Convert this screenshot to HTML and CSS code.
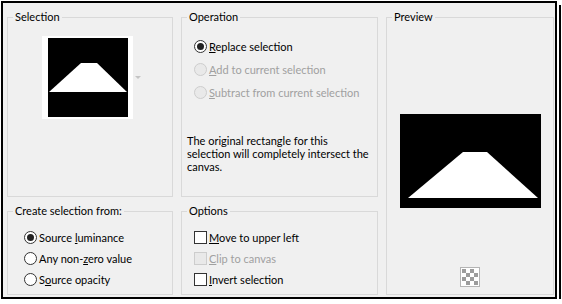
FILE: index.html
```html
<!DOCTYPE html>
<html lang="en">
<head>
    <meta charset="UTF-8">
    <meta name="viewport" content="width=device-width, initial-scale=1.0">
    <title>Selection from mask</title>
    <link rel="stylesheet" href="styles.css">
</head>
<body>

    <div class="frame">
        <div class="dialog">

            <fieldset class="group sel">
                <legend>Selection</legend>
                <div class="thumb-row">
                    <div class="thumb">
                        <svg width="80" height="79" viewBox="0 0 80 79">
                            <rect width="80" height="79" fill="#000"/>
                            <polygon points="33,25 49,25 79,54 1,54" fill="#fff"/>
                        </svg>
                    </div>
                    <span class="drop-arrow"></span>
                </div>
            </fieldset>

            <fieldset class="group op">
                <legend>Operation</legend>
                <div class="op-list">
                    <div class="opt"><span class="radio on"></span><span><u>R</u>eplace selection</span></div>
                    <div class="opt off"><span class="radio"></span><span><u>A</u>dd to current selection</span></div>
                    <div class="opt off"><span class="radio"></span><span><u>S</u>ubtract from current selection</span></div>
                </div>
                <p class="note">The original rectangle for this<br>selection will completely intersect the<br>canvas.</p>
            </fieldset>

            <fieldset class="group preview">
                <legend>Preview</legend>
                <div class="preview-body">
                    <div class="preview-img">
                        <svg width="141" height="94" viewBox="0 0 141 94">
                            <rect width="141" height="94" fill="#000"/>
                            <polygon points="63,38 87,38 138,84 8,84" fill="#fff"/>
                        </svg>
                    </div>
                    <div class="checker">
                        <svg width="20" height="20" viewBox="0 0 20 20">
                            <rect x="0.5" y="0.5" width="19" height="19" fill="#fff" stroke="#b4b4b4"/>
                            <rect x="2" y="2" width="4" height="4" fill="#9c9c9c"/>
                            <rect x="10" y="2" width="4" height="4" fill="#9c9c9c"/>
                            <rect x="6" y="6" width="4" height="4" fill="#9c9c9c"/>
                            <rect x="14" y="6" width="4" height="4" fill="#9c9c9c"/>
                            <rect x="2" y="10" width="4" height="4" fill="#9c9c9c"/>
                            <rect x="10" y="10" width="4" height="4" fill="#9c9c9c"/>
                            <rect x="6" y="14" width="4" height="4" fill="#9c9c9c"/>
                            <rect x="14" y="14" width="4" height="4" fill="#9c9c9c"/>
                        </svg>
                    </div>
                </div>
            </fieldset>

            <fieldset class="group create">
                <legend>Create selection from:</legend>
                <div class="small-list">
                    <div class="opt"><span class="radio on"></span><span>Source <u>l</u>uminance</span></div>
                    <div class="opt"><span class="radio"></span><span>Any non-<u>z</u>ero value</span></div>
                    <div class="opt"><span class="radio"></span><span>S<u>o</u>urce opacity</span></div>
                </div>
            </fieldset>

            <fieldset class="group options">
                <legend>Options</legend>
                <div class="small-list">
                    <div class="opt"><span class="check"></span><span><u>M</u>ove to upper left</span></div>
                    <div class="opt off"><span class="check"></span><span><u>C</u>lip to canvas</span></div>
                    <div class="opt"><span class="check"></span><span><u>I</u>nvert selection</span></div>
                </div>
            </fieldset>

        </div>
    </div>

</body>
</html>
```

FILE: styles.css
```css
*, *::after, *::before{
    margin: 0;
    padding: 0;
    box-sizing: border-box;
}

body{
    background-color: #fff;
    font-family: Lato, "Liberation Sans", sans-serif;
    font-size: 11px;
    color: #000;
}

/* black frame round the dialog, with the offset shadow line */
.frame{
    margin: 1px 0 0 1px;
    width: 556px;
    height: 298px;
    border: 2px solid #000;
    background-color: #f0f0f0;
    box-shadow: 2px 2px 0 #fff, 4px 4px 0 #000;
}
.dialog{
    height: 100%;
    padding: 7px 1px 2px 4px;
    display: grid;
    grid-template-columns: 166px 197px 168px;
    grid-template-rows: 187px 91px;
    column-gap: 8px;
    row-gap: 7px;
}

.group{
    border: 1px solid #d9d9d9;
    min-width: 0;
}
.group legend{
    margin-left: 5px;
    padding: 0 2px;
    line-height: 14px;
}
.preview{
    grid-column: 3;
    grid-row: 1 / 3;
}

/* selection thumbnail */
.thumb-row{
    display: flex;
    justify-content: center;
    align-items: center;
    gap: 2px;
    padding-top: 12px;
    padding-left: 3px;
}
.thumb{
    width: 91px;
    height: 83px;
    background-color: #fff;
    padding: 2px 0 0 6px;
}
.thumb svg, .preview-img svg, .checker svg{
    display: block;
}
.drop-arrow{
    width: 0;
    height: 0;
    border-left: 3px solid transparent;
    border-right: 3px solid transparent;
    border-top: 3px solid #c4c4c4;
}

/* radios and checkboxes */
.opt{
    display: flex;
    align-items: center;
    gap: 2px;
    white-space: nowrap;
}
.opt.off{
    color: #a0a0a0;
}
.radio, .check{
    width: 13px;
    height: 13px;
    border: 1px solid #333;
    background-color: #fff;
    flex: none;
    display: flex;
    align-items: center;
    justify-content: center;
}
.radio{
    border-radius: 50%;
}
.radio.on::after{
    content: "";
    width: 7px;
    height: 7px;
    border-radius: 50%;
    background-color: #222;
}
.off .radio, .off .check{
    border-color: #cdcdcd;
    background-color: #e9e9e9;
}

.op-list{
    padding: 11px 0 0 12px;
}
.op-list .opt{
    height: 23px;
}
.note{
    margin-top: 30px;
    padding-left: 5px;
    line-height: 13px;
    white-space: nowrap;
}

.small-list{
    padding-top: 9px;
}
.small-list .opt{
    height: 21px;
}
.create .small-list{
    padding-left: 16px;
}
.options .small-list{
    padding-left: 12px;
}

/* preview */
.preview-body{
    display: flex;
    flex-direction: column;
    align-items: center;
}
.preview-img{
    margin-top: 90px;
}
.checker{
    margin-top: 59px;
}
```
